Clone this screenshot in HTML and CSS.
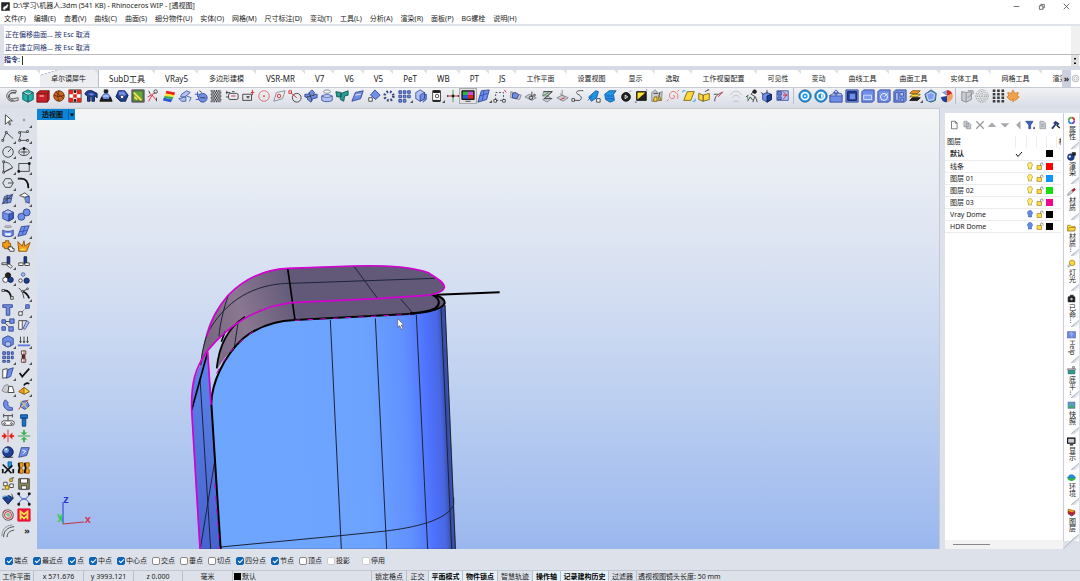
FILE: index.html
```html
<!DOCTYPE html>
<html lang="zh-CN">
<head>
    <meta charset="UTF-8" />
    <meta name="viewport" content="width=device-width, initial-scale=1.0"/>
    <title>Rhinoceros WIP</title>
    <link rel="stylesheet" href="styles.css">
</head>
<body>
    <header class="titlebar">
        <svg class="app-icon" viewBox="0 0 16 16"><path class="k" d="M1 1h14v14H1z"/><path class="w" d="M3 13c0-4 2-6 5-6l4-4 1 3-2 5-3 1-1 3z"/><path d="M5 3l2 3M3 5l3 2"/></svg>
        <span class="title">D:\学习\机器人.3dm (541 KB) - Rhinoceros WIP - [透视图]</span>
        <div class="window-buttons">
            <button title="最小化"><svg viewBox="0 0 10 10"><path d="M1 5h8"/></svg></button>
            <button title="还原"><svg viewBox="0 0 10 10"><path d="M2 4h5v5H2zM4 4V2h5v5H7"/></svg></button>
            <button title="关闭"><svg viewBox="0 0 10 10"><path d="M1 1l8 8M9 1L1 9"/></svg></button>
        </div>
    </header>

    <nav class="menu">
        <a href="#">文件(F)</a><a href="#">编辑(E)</a><a href="#">查看(V)</a><a href="#">曲线(C)</a><a href="#">曲面(S)</a><a href="#">细分物件(U)</a><a href="#">实体(O)</a><a href="#">网格(M)</a><a href="#">尺寸标注(D)</a><a href="#">变动(T)</a><a href="#">工具(L)</a><a href="#">分析(A)</a><a href="#">渲染(R)</a><a href="#">面板(P)</a><a href="#">BG螺栓</a><a href="#">说明(H)</a>
    </nav>

    <section class="command">
        <div class="history">
            <p>正在偏移曲面... 按 Esc 取消</p>
            <p>正在建立网格... 按 Esc 取消</p>
        </div>
        <div class="prompt">
            <label for="cmd">指令:</label>
            <input type="text" id="cmd" autocomplete="off" />
            <button class="spin" title="历史"><svg viewBox="0 0 8 10"><path class="k" d="M3 3l1-1 1 1zM3 7l1 1 1-1z"/></svg></button>
        </div>
    </section>

    <div class="tabbar">
        <div class="tabs">
            <button class="tab">标准</button>
            <button class="tab active">卓尔谟犀牛</button>
            <button class="tab en">SubD工具</button>
            <button class="tab en">VRay5</button>
            <button class="tab">多边形建模</button>
            <button class="tab en">VSR-MR</button>
            <button class="tab en">V7</button>
            <button class="tab en">V6</button>
            <button class="tab en">V5</button>
            <button class="tab en">PeT</button>
            <button class="tab en">WB</button>
            <button class="tab en">PT</button>
            <button class="tab en">JS</button>
            <button class="tab">工作平面</button>
            <button class="tab">设置视图</button>
            <button class="tab">显示</button>
            <button class="tab">选取</button>
            <button class="tab">工作视窗配置</button>
            <button class="tab">可见性</button>
            <button class="tab">变动</button>
            <button class="tab">曲线工具</button>
            <button class="tab">曲面工具</button>
            <button class="tab">实体工具</button>
            <button class="tab">网格工具</button>
            <button class="tab">渲染</button>
        </div>
        <button class="overflow">»</button>
        <button class="gear" title="选项"><svg viewBox="0 0 16 16"><circle class="g" cx="8" cy="8" r="6"/><circle class="g" cx="8" cy="8" r="3"/></svg></button>
    </div>

    <div class="toolbar">
        <div class="group g27">
            <button><svg viewBox="0 0 16 16"><path class="lg" d="M13 2C6 0 2 4 2 8c0 4 4 7 8 6l5-1v-3l-5 1c-3 1-5-1-5-3 0-3 3-4 7-3z"/><path d="M12 4C7 3 4 6 4 9s3 4 6 4"/></svg></button>
            <button><svg viewBox="0 0 16 16"><path class="teal" d="M8 1l6 3v8l-6 3-6-3V4z"/><path d="M2 4l6 3 6-3M8 7v8"/><path class="white" d="M4 4l4 2 3-1"/></svg></button>
            <button><svg viewBox="0 0 16 16"><path class="red" d="M1 5l3-3h11v10l-2 3H1z"/><path class="darkred" d="M1 5h12v10M13 5l2-3"/><path class="white" d="M4 8h5"/></svg></button>
            <button><svg viewBox="0 0 16 16"><circle class="brown" cx="8" cy="8" r="6"/><path class="darkred" d="M2 7c4 2 8 2 12 0M8 2c-2 4-2 8 0 12M4 3c2 3 6 4 9 8"/></svg></button>
            <button><svg viewBox="0 0 16 16"><path class="w" d="M1 1h14v14H1z"/><path class="redf" d="M1 1h5v5H1zM10 1h5v5h-5zM6 6h4v4H6zM1 10h5v5H1zM10 10h5v5h-5z"/><path class="k" d="M7 2h2v2H7zM7 12h2v2H7z"/></svg></button>
            <button><svg viewBox="0 0 16 16"><path class="navy" d="M1 6c1-4 5-5 8-4l6 3v5l-3-2v6H9V9L7 8v6H4V8z"/><path class="b" d="M4 6c2-2 6-2 8 0l-3 2z"/></svg></button>
            <button><svg viewBox="0 0 16 16"><path class="b" d="M3 13C3 8 5 5 8 5s5 3 5 8z"/><path class="k" d="M6 1h4v3H6zM1 14l2-5 2 3h6l2-3 2 5z"/><path class="white" d="M5 8h6"/></svg></button>
            <button><svg viewBox="0 0 16 16"><path class="navy" d="M4 2h7l4 5-3 7H6L1 9z"/><path class="b" d="M4 3l6-1 3 4-3 3-6-2z"/><circle class="w" cx="8" cy="9" r="2"/></svg></button>
            <button><svg viewBox="0 0 16 16"><path class="green" d="M2 2h12v12H2z"/><path class="ye" d="M3 4l9 9M4 9l3 3"/><path d="M1 1h14v14H1z"/></svg></button>
            <button><svg viewBox="0 0 16 16"><path class="rd" d="M2 9l9-5M3 14l4-7 5 6"/><circle cx="11" cy="3" r="2"/><path d="M3 2l2 4M12 10v4"/></svg></button>
            <button><svg viewBox="0 0 16 16"><path class="redf" d="M5 2l10 2-1 3L4 5z"/><path class="yf" d="M4 5l10 2-1 2L3 8z"/><path class="gf" d="M3 8l10 1-1 3L2 10z"/><path class="bf" d="M2 10l10 2-2 3-9-2z"/></svg></button>
            <button><svg viewBox="0 0 16 16"><path class="lb" d="M4 6l6-4 4 2-6 5-5 0z"/><path class="lb" d="M1 11l8-2v5H4z"/><path class="bl" d="M10 8l5 2-2 4"/></svg></button>
            <button><svg viewBox="0 0 16 16"><circle class="b" cx="10" cy="10" r="5"/><path class="bl" d="M1 6h6M4 3v6M2 12h3"/><path d="M6 2l3 2M7 10h6"/></svg></button>
            <button><svg viewBox="0 0 16 16"><path class="check" d="M2 2h12M3 4h12M2 6h12M3 8h12M2 10h12M3 12h12M2 14h12"/></svg></button>
            <button><svg viewBox="0 0 16 16"><rect x="4" y="5" width="11" height="7" rx="2"/><path class="rd" d="M7 8h5"/><path d="M1 4h5M2 2v4M1 9h3M8 3h3"/></svg></button>
            <button><svg viewBox="0 0 16 16"><path d="M2 6h10v7H2z"/><path class="rd" d="M13 1v6M11 4h4M7 9h2"/><path d="M6 9h4M8 8v3"/></svg></button>
            <button><svg viewBox="0 0 16 16"><circle class="pk" cx="8" cy="8" r="6"/><circle class="redf" cx="8" cy="8" r="1"/></svg></button>
            <button><svg viewBox="0 0 16 16"><path class="g" d="M5 4l10-2-3 9-10 3z"/><circle class="rd" cx="8" cy="8" r="2"/></svg></button>
            <button><svg viewBox="0 0 16 16"><circle cx="10" cy="10" r="5"/><path class="rd" d="M1 2h3v3H1zM4 5l6 5"/></svg></button>
            <button><svg viewBox="0 0 16 16"><path class="b" d="M6 4l3-3 3 3-1 2h4v4l-5 1-2 4-4-3v-2l-3-1V6h4z"/><path d="M3 9l9-2M6 4l3 9"/></svg></button>
            <button><svg viewBox="0 0 16 16"><ellipse class="g" cx="8" cy="3" rx="4" ry="2"/><path class="lb" d="M2 8c3 2 9 2 12 0v5c-3 2-9 2-12 0z"/><path class="bl" d="M2 8c3-2 9-2 12 0"/></svg></button>
            <button><svg viewBox="0 0 16 16"><path class="teal2" d="M1 3l6 1v5H2zM7 5l8-3v5l-4 1-1 6-4-2V9z"/></svg></button>
            <button><svg viewBox="0 0 16 16"><path class="b" d="M5 4l9-2-3 9-10 3z"/><path class="white" d="M5 7l6-1"/></svg></button>
            <button><svg viewBox="0 0 16 16"><path class="b" d="M9 1l6 6-5 5-6-5z"/><path class="w" d="M2 10h4v4H2z"/></svg></button>
            <button><svg viewBox="0 0 16 16"><circle class="dots" cx="8" cy="8" r="5"/></svg></button>
            <button class="more"><svg viewBox="0 0 16 16"><path class="b" d="M1 2h3v3H1zM6 2h3v3H6zM11 2h3v3h-3zM1 7h3v3H1zM6 7h3v3H6zM11 7h3v3h-3zM1 12h3v3H1zM6 12h3v3H6z"/></svg></button>
            <button><svg viewBox="0 0 16 16"><path class="lb" d="M2 4l5-3 5 3v7l-5 3-5-3z"/><path class="b" d="M7 7l5-3v7l-5 3zM12 6h2v6l-4 3"/></svg></button>
        </div>
        <div class="group g23">
            <button class="more"><svg viewBox="0 0 16 16"><path class="w" d="M3 2h9v12H3z"/><path class="k" d="M4 2h7v2H4zM4 13h7v1H4z"/><circle cx="8" cy="8" r="2"/></svg></button>
            <button><svg viewBox="0 0 16 16"><path class="rd" d="M1 8h14"/><path class="gr" d="M8 1v14"/><path class="k" d="M7 7h2v2H7zM2 7v2M14 7v2"/></svg></button>
            <button class="pressed"><svg viewBox="0 0 16 16"><path class="k" d="M1 2h14v10H1z"/><path class="gf" d="M2 3h6v4H2z"/><path class="mf" d="M8 3h6v4H8z"/><path class="bf" d="M2 7h6v4H2z"/><path class="redf" d="M8 7h6v4H8z"/><path d="M5 14h6"/></svg></button>
            <button class="more"><svg viewBox="0 0 16 16"><path class="b" d="M5 2l9-1-3 11-10 3z"/><path class="bl" d="M3 8l9-3M8 2L6 13"/></svg></button>
            <button><svg viewBox="0 0 16 16"><path class="dash" d="M3 4h9v9H3z"/><path class="w" d="M1 12h3v3H1zM11 12h3v3h-3z"/><path class="rd" d="M13 1l2 3"/></svg></button>
            <button><svg viewBox="0 0 16 16"><path class="gy" d="M2 3l12 4-2 5-10-2z"/><path class="b" d="M4 5l4-1 3 3-2 4-5-1z"/></svg></button>
            <button><svg viewBox="0 0 16 16"><path class="gy" d="M1 9l5-3 8 4-5 3z"/><circle cx="8" cy="10" r="2"/><circle cx="12" cy="7" r="1"/><path d="M9 3v6"/></svg></button>
            <button><svg viewBox="0 0 16 16"><path class="gy" d="M4 3h10l-5 5H3zM3 12l6-4 4 3-5 4z"/><path class="gr" d="M3 8l7-4"/><path d="M4 3h10L5 11h9"/></svg></button>
            <button><svg viewBox="0 0 16 16"><path class="gy" d="M1 10l6-3 7 3-6 4z"/><path class="g" d="M7 1v6l3 2M5 5l2 3"/><path class="rd" d="M5 12l5-2"/></svg></button>
            <button><svg viewBox="0 0 16 16"><path d="M14 2C7 1 4 4 8 6s5 5 2 7H4"/><path class="w" d="M1 11h3v3H1z"/></svg></button>
            <button><svg viewBox="0 0 16 16"><path class="cy" d="M2 9l8-7 3 1-2 7-6 4z"/><path class="w" d="M11 11h4v4h-4z"/><path class="bl" d="M1 13l5-5"/></svg></button>
            <button><svg viewBox="0 0 16 16"><path class="cy" d="M2 6l5-4h8l-3 4 1 7-5 2-5-3z"/><path class="bl" d="M3 8h8M4 11h8"/></svg></button>
            <button><svg viewBox="0 0 16 16"><circle class="k" cx="8" cy="9" r="5"/><path class="white" d="M7 7l3 2-3 2z"/><path class="g" d="M12 3l2-1"/></svg></button>
            <button><svg viewBox="0 0 16 16"><path class="k" d="M3 3h11v10H3z"/><path class="yf" d="M4 4h9l-9 8z"/><path d="M1 15h2M14 1h1"/></svg></button>
            <button><svg viewBox="0 0 16 16"><path class="gy" d="M2 4l4-3 3 4 5-2-1 10-11 1z"/><path class="y" d="M5 9h3v5H4zM10 7l3 6h-3z"/><path d="M4 5h5M11 4v3"/></svg></button>
            <button><svg viewBox="0 0 16 16"><path class="pk" d="M8 8c2-2 3 2 0 3-4 1-6-5-1-8 5-1 8 4 6 8M3 12l-2 2M13 3l2-2"/></svg></button>
            <button><svg viewBox="0 0 16 16"><path class="y" d="M6 3h8l-4 10H2z"/><path class="cl" d="M1 4V2h3M12 14h3v-3"/></svg></button>
            <button><svg viewBox="0 0 16 16"><path class="y" d="M2 5l5 2 7-2v7l-7 2-5-2z"/><path d="M7 7v7M9 3l4-2M12 1h2"/></svg></button>
            <button><svg viewBox="0 0 16 16"><path d="M2 14c0-6 3-8 9-10M1 6h4"/><path class="rd" d="M6 9l5-6"/></svg></button>
            <button><svg viewBox="0 0 16 16"><path class="lgs" d="M2 7c2-6 10-6 12 0M4 10c2-4 6-4 8 0M5 14h6"/></svg></button>
            <button><svg viewBox="0 0 16 16"><path d="M3 14l3-5 3 4M10 2l-3 4 5 3 2 6M11 9l-2 6M1 9l3-2"/><circle class="k" cx="11" cy="3" r="2"/><path class="gr" d="M3 7v5"/></svg></button>
            <button><svg viewBox="0 0 16 16"><path class="b" d="M3 6l5-2 5 2v6l-5 3-5-3z"/><path class="navy" d="M8 8l5-2v6l-5 3z"/><path d="M8 1v4M1 4l3 2"/></svg></button>
            <button><svg viewBox="0 0 16 16"><path class="lb" d="M1 2h13v11H1z"/><path class="rd" d="M8 3l4 4-4 5M8 7h5"/><path class="b" d="M2 3h4v4H2zM2 9h4v3H2z"/></svg></button>
        </div>
        <div class="group g10">
            <button><svg viewBox="0 0 16 16"><circle class="cy" cx="8" cy="8" r="7"/><circle class="wring" cx="8" cy="8" r="4"/><path class="wf" d="M7 7h2v2H7z"/></svg></button>
            <button><svg viewBox="0 0 16 16"><circle class="cy" cx="8" cy="8" r="7"/><circle class="wring" cx="8" cy="8" r="4"/><path class="wf" d="M8 6h2v4H8z"/></svg></button>
            <button><svg viewBox="0 0 16 16"><path class="b" d="M1 7h14v8H1z"/><path class="lb" d="M1 8l4-3h9l1 3zM8 1l3 3H9v3H7V4H5z"/></svg></button>
            <button><svg viewBox="0 0 16 16"><path class="b" d="M1 1h14v14H1z"/><path class="navy" d="M3 3h10v10H3z"/><path class="b" d="M5 5h7v7H5z"/></svg></button>
            <button><svg viewBox="0 0 16 16"><path class="b" d="M1 3l2-2h12v12l-2 2H1z"/><path class="lb2" d="M3 7h9v5H3z"/></svg></button>
            <button><svg viewBox="0 0 16 16"><path class="b" d="M1 3l2-2h12v12l-2 2H1z"/><circle class="white" cx="8" cy="9" r="4"/><path class="white" d="M8 9l4-4"/></svg></button>
            <button><svg viewBox="0 0 16 16"><path class="b" d="M1 3l2-2h12v12l-2 2H1z"/><path class="lb" d="M3 4h3v9H3zM8 4h4v4H8zM9 11h3v3H9z"/></svg></button>
            <button class="more"><svg viewBox="0 0 16 16"><path class="o" d="M5 2h9l-3 3H2z"/><path class="y" d="M5 6h9l-3 3H2z"/><path class="k" d="M5 10h9l-3 3H2z"/></svg></button>
            <button><svg viewBox="0 0 16 16"><path class="steel" d="M8 1l6 4-1 8-5 2-5-2-2-7z"/><path class="lb2" d="M3 6l5-2 4 2-1 6-6 1z"/></svg></button>
            <button><svg viewBox="0 0 16 16"><circle class="wf" cx="8" cy="8" r="7"/><path class="redf" d="M8 8V1a7 7 0 0 1 6 4z"/><path class="navyf" d="M8 8L1 9a7 7 0 0 0 7 6z"/><path class="of" d="M8 8l6-3c2 4 0 9-6 10z"/><path class="sf" d="M8 8L2 4l6-3z"/></svg></button>
        </div>
        <div class="group g4">
            <button><svg viewBox="0 0 16 16"><path class="gy" d="M2 3l5 1 6-1v9l-6 3-5-2z"/><path class="g" d="M7 5v9M9 2h6v4M9 10l5-5"/></svg></button>
            <button><svg viewBox="0 0 16 16"><circle class="dotg" cx="8" cy="8" r="7"/><circle class="dotg" cx="8" cy="8" r="5"/><circle class="dotg" cx="8" cy="8" r="3"/><circle class="dotg" cx="8" cy="8" r="1"/></svg></button>
            <button><svg viewBox="0 0 16 16"><path class="dot2" d="M2 2h13M2 6h13M2 10h13M2 14h13"/></svg></button>
            <button><svg viewBox="0 0 16 16"><path class="leaf" d="M8 1l2 4 4-1-1 4 2 1-4 4-3-1v3-3l-3 1-4-4 2-1-1-4 4 1z"/></svg></button>
        </div>
    </div>

    <main>
        <aside class="sidebar">
            <button><svg viewBox="0 0 16 16"><path class="w" d="M5 2v11l3-3 2 4 1-1-2-4h4z"/></svg></button>
            <button class="more"><svg viewBox="0 0 16 16"><circle class="g" cx="8" cy="8" r="1"/></svg></button>
            <button class="more"><svg viewBox="0 0 16 16"><path d="M2 13l4-9 8 7"/><path class="w" d="M1 12h2v2H1zM5 3h2v2H5z"/></svg></button>
            <button class="more"><svg viewBox="0 0 16 16"><path d="M3 4c3-2 6 1 9-1M3 4c3 2-1 6 0 9h9"/><path class="w" d="M2 3h2v2H2zM11 2h2v2h-2zM2 12h2v2H2zM11 12h2v2h-2z"/></svg></button>
            <button class="more"><svg viewBox="0 0 16 16"><circle cx="8" cy="8" r="6"/><path d="M8 8l4-4"/></svg></button>
            <button class="more"><svg viewBox="0 0 16 16"><ellipse cx="8" cy="8" rx="6" ry="4"/><path d="M4 8h8M8 3v8"/><path class="k" d="M7 3h2v2H7z"/></svg></button>
            <button class="more"><svg viewBox="0 0 16 16"><path d="M3 14V2c6 1 9 3 10 7zM3 14l10-5"/><path class="w" d="M2 1h2v2H2zM2 13h2v2H2z"/></svg></button>
            <button class="more"><svg viewBox="0 0 16 16"><path d="M2 4h12v9H2z"/><path class="k" d="M1 12h2v2H1zM13 3h2v2h-2z"/></svg></button>
            <button class="more"><svg viewBox="0 0 16 16"><path d="M5 3h6l3 5-3 5H5L2 8zM8 8h6"/></svg></button>
            <button class="more"><svg viewBox="0 0 16 16"><path class="thick" d="M1 3h4c6 0 8 4 8 11"/><path d="M1 3h3"/></svg></button>
            <button class="more"><svg viewBox="0 0 16 16"><path class="b" d="M4 5l9-2-2 9-9 1z"/><path d="M1 14L14 2M3 8l9-1M7 3v10"/></svg></button>
            <button class="more"><svg viewBox="0 0 16 16"><path class="w" d="M3 4l6-3 5 4-5 1z"/><path class="b" d="M9 6l5-1v8l-4-2z"/><path class="g" d="M3 4l6 3 1 6"/></svg></button>
            <button class="more"><svg viewBox="0 0 16 16"><path class="b" d="M2 5l6-3 6 3v7l-6 3-6-3z"/><path class="blue3" d="M9 7l5-2v7l-5 3z"/><path class="lb" d="M2 5l6-3 6 3-6 2z"/></svg></button>
            <button class="more"><svg viewBox="0 0 16 16"><circle class="b" cx="11" cy="5" r="4"/><circle class="b" cx="5" cy="10" r="4"/></svg></button>
            <button class="more"><svg viewBox="0 0 16 16"><ellipse class="g" cx="8" cy="3" rx="4" ry="1"/><path class="b" d="M2 7c3 2 9 2 12 0v6c-3 2-9 2-12 0z"/><path class="wf" d="M5 10c2 1 4 1 6 0v3H5z"/></svg></button>
            <button class="more"><svg viewBox="0 0 16 16"><path class="b" d="M5 3l9-1-4 10-9 2z"/><path class="bl" d="M3 9l9-2M9 3L6 12"/></svg></button>
            <button><svg viewBox="0 0 16 16"><path class="o" d="M2 4h3V2h4v3h2v4H8v2H4V9H2z"/><path class="w" d="M9 9h4v2h2v3h-5v-2H8z"/></svg></button>
            <button><svg viewBox="0 0 16 16"><path class="o" d="M2 14L1 3l5 5 2-6 1 6 6-4-4 10z"/><path class="ye" d="M4 12h6"/></svg></button>
            <button class="more"><svg viewBox="0 0 16 16"><path class="navy" d="M7 2h3v8H7z"/><path class="w" d="M1 9h6v2H1zM9 10l4 3-2 2-4-3z"/></svg></button>
            <button><svg viewBox="0 0 16 16"><path class="navy" d="M8 2h3v8H8z"/><path class="w" d="M2 9h5v3H2zM9 9h5v3H9z"/></svg></button>
            <button class="more"><svg viewBox="0 0 16 16"><circle class="k" cx="8" cy="5" r="3"/><circle class="w" cx="5" cy="10" r="3"/><circle class="navy" cx="11" cy="10" r="3"/></svg></button>
            <button><svg viewBox="0 0 16 16"><circle class="lb" cx="7" cy="4" r="2"/><circle class="w" cx="4" cy="11" r="2"/><circle class="navy" cx="11" cy="11" r="3"/></svg></button>
            <button><svg viewBox="0 0 16 16"><path class="thick" d="M2 4c6-1 9 3 10 9"/><path class="w" d="M1 3h3v2H1zM11 11h3v3h-3z"/></svg></button>
            <button class="more"><svg viewBox="0 0 16 16"><path class="thick" d="M6 5c4 1 6 3 8 8"/><path d="M2 1l4 4 2 8M6 5l7-3"/><circle class="w" cx="6" cy="5" r="1"/><circle class="w" cx="12" cy="2" r="1"/></svg></button>
            <button><svg viewBox="0 0 16 16"><path class="b" d="M2 2h11v3h-3v9H6V5H2z"/></svg></button>
            <button class="more"><svg viewBox="0 0 16 16"><path class="w" d="M2 10h4v4H2z"/><path class="b" d="M10 2h4v4h-4z"/><path class="dash" d="M6 10l4-4"/></svg></button>
            <button><svg viewBox="0 0 16 16"><path class="b" d="M1 2h4v4H1zM10 1h5v5h-5zM1 10h4v4H1zM9 10h5v5H9z"/><path d="M5 6l4 4M5 4h5"/></svg></button>
            <button><svg viewBox="0 0 16 16"><path class="w" d="M2 3h4v10H2z"/><path class="lb" d="M11 3l3 2-5 8-2-1z"/><path d="M6 3h5"/></svg></button>
            <button class="more"><svg viewBox="0 0 16 16"><path class="b" d="M2 5l6-3 6 3v7l-6 3-6-3z"/><path class="lb" d="M5 9h6v5H5z"/></svg></button>
            <button class="more"><svg viewBox="0 0 16 16"><path d="M4 3v7M8 3v7M12 3v7M3 8l1 2 1-2M7 8l1 2 1-2M11 8l1 2 1-2"/><path class="bl2" d="M1 13h14"/></svg></button>
            <button class="more"><svg viewBox="0 0 16 16"><path class="b" d="M2 2h3v3H2zM7 2h3v3H7zM12 2h2v3h-2zM2 7h3v3H2zM7 7h3v3H7zM12 7h2v3h-2zM2 12h3v2H2zM7 12h3v2H7z"/></svg></button>
            <button class="more"><svg viewBox="0 0 16 16"><path class="w" d="M5 1h5v4H5zM5 10h5v4H5z"/><path class="k" d="M6 6h3v3H6z"/><path class="rd" d="M8 1v14"/></svg></button>
            <button class="more"><svg viewBox="0 0 16 16"><path class="w" d="M2 4l5-1v10l-5 1z"/><path class="b" d="M8 4l6-2-3 10-5 2z"/></svg></button>
            <button class="more"><svg viewBox="0 0 16 16"><path class="thick" d="M3 8l3 4 8-9"/></svg></button>
            <button class="more"><svg viewBox="0 0 16 16"><path class="gy" d="M1 10l3-6 4-1 2 8-5 1z"/><path class="w" d="M9 5h4l2 7H8z"/></svg></button>
            <button class="more"><svg viewBox="0 0 16 16"><path class="o" d="M2 11l6-5 6 5-6 3z"/><path class="y" d="M8 6l6 5-6 3z"/><path class="thick" d="M8 4c1-3 4-3 6-2"/></svg></button>
            <button><svg viewBox="0 0 16 16"><path class="b" d="M5 2C1 6 3 12 8 14h5v-3c-4 0-6-3-5-6z"/></svg></button>
            <button><svg viewBox="0 0 16 16"><path class="b" d="M5 4l6-1 3 6-5 4-5-3z"/><path class="yel" d="M3 2l11 12M4 11l8-7"/><path class="rd" d="M13 2l-2 2M2 13l2-3"/></svg></button>
            <button><svg viewBox="0 0 16 16"><rect class="w" x="1" y="9" width="14" height="5" rx="2"/><path d="M3 3h10M3 1v4M13 1v4M8 3v6"/><circle cx="4" cy="12" r="1"/><circle cx="12" cy="12" r="1"/></svg></button>
            <button><svg viewBox="0 0 16 16"><path class="blue2" d="M4 2h8v4H4zM6 6h4v9H6z"/></svg></button>
            <button><svg viewBox="0 0 16 16"><path class="redf" d="M1 7h2V4l4 4-4 4V9H1zM15 7h-2V4L9 8l4 4V9h2z"/><path class="rd" d="M8 1v14"/></svg></button>
            <button><svg viewBox="0 0 16 16"><path class="gf" d="M7 1h2v3h3L8 7 4 4h3zM7 15h2v-3h3L8 9l-4 3h3z"/><path class="gr" d="M1 8h14"/></svg></button>
            <button><svg viewBox="0 0 16 16"><path d="M2 14h12"/><circle class="navy" cx="8" cy="8" r="6"/><circle class="sf" cx="6" cy="6" r="3"/><circle class="wf" cx="6" cy="5" r="1"/></svg></button>
            <button><svg viewBox="0 0 16 16"><path class="b" d="M5 3l9 0-3 9-9 2z"/><path class="white" d="M6 6l4 1-3 3"/></svg></button>
            <button><svg viewBox="0 0 16 16"><path class="cy" d="M8 1h4v6H8z"/><path class="thick" d="M2 4l10 10M13 5L4 14M2 14V9M14 14V9"/></svg></button>
            <button><svg viewBox="0 0 16 16"><path class="o" d="M3 2h4v4L5 8l2 2v4H3zM10 2h4v4l-2 2 2 2v4h-4z"/><path class="thick" d="M2 2v3l1 3-1 3v3M9 2v3l1 3-1 3v3"/></svg></button>
            <button><svg viewBox="0 0 16 16"><path class="w" d="M3 6h4v4H3zM10 8h4v4h-4z"/><path class="y" d="M5 10h4v4H5zM10 2h3v3h-3z"/><path d="M1 14h3M12 1h3"/></svg></button>
            <button><svg viewBox="0 0 16 16"><path class="olive" d="M2 2h12v12H2z"/><path class="w" d="M4 2h8v5H4zM5 10h6v4H5z"/></svg></button>
            <button><svg viewBox="0 0 16 16"><path class="navy" d="M2 7l7-3 5 3-6 7z"/><path class="cl" d="M1 6c3-2 6-2 9 1"/><path d="M12 2l2 5"/></svg></button>
            <button><svg viewBox="0 0 16 16"><path class="bl" d="M2 14C4 6 12 6 14 14M2 2c2 8 10 8 12 0"/><path class="k" d="M1 1h2v2H1zM13 1h2v2h-2zM1 13h2v2H1zM13 13h2v2h-2z"/></svg></button>
            <button><svg viewBox="0 0 16 16"><circle class="lg" cx="8" cy="8" r="6"/><circle class="rd" cx="8" cy="8" r="4"/><path class="gr" d="M6 7h4M7 9h3"/><path class="rd" d="M2 5l3-3M11 14l3-3"/></svg></button>
            <button><svg viewBox="0 0 16 16"><path class="magred" d="M1 1h14v14H1z"/><path class="fat" d="M4 13V8l4 4 4-4v5M4 8V4l4 3 4-3v4"/></svg></button>
            <button><svg viewBox="0 0 16 16"><path d="M3 15C3 8 7 4 15 3M7 15c0-4 2-7 8-8"/><path class="g" d="M1 14C1 6 5 2 13 1"/></svg></button>
            <button class="chev">»</button>
        </aside>

        <section class="viewport">
            <div class="view-title"><span>透视图</span><button title="视图菜单"><svg viewBox="0 0 8 8"><path d="M1 2h6L4 6z"/></svg></button></div>
            <!-- model units: 3 per screen pixel -->
            <svg class="model" viewBox="-429 -423 2709 1320">
                <defs>
                    <linearGradient id="front" gradientUnits="userSpaceOnUse" x1="94" y1="500" x2="826" y2="470">
                        <stop offset="0" stop-color="#6ea6fe"/><stop offset=".64" stop-color="#6ca3ff"/><stop offset=".8" stop-color="#6090ff"/>
                        <stop offset=".89" stop-color="#4e72ff"/><stop offset=".94" stop-color="#4867e2"/><stop offset=".965" stop-color="#364ca4"/><stop offset="1" stop-color="#5d80e0"/>
                    </linearGradient>
                    <linearGradient id="cap" gradientUnits="userSpaceOnUse" x1="70" y1="200" x2="340" y2="120">
                        <stop offset="0" stop-color="#7b6983"/><stop offset=".4" stop-color="#8a7790"/><stop offset="1" stop-color="#625979"/>
                    </linearGradient>
                    <linearGradient id="side" x1="0" y1="0" x2="0" y2="1">
                        <stop offset="0" stop-color="#5c84ea"/><stop offset="1" stop-color="#4763cf"/>
                    </linearGradient>
                </defs>
                <path fill="url(#side)" d="M62 345C45 375 33 420 35 480L60 897H122L94 450L83 305Z"/>
                <path fill="url(#cap)" d="M112 355C112 300 130 245 190 200L335 155L760 132C790 140 800 160 785 172C770 182 730 188 700 189L345 211C240 217 165 270 112 355Z"/>
                <path fill="url(#cap)" d="M62 345C75 240 95 190 145 135C200 80 260 58 323 55L520 48C640 44 700 52 745 68C765 82 793 95 793 112C790 125 770 132 740 136L590 146L335 158C230 172 150 220 80 305Z"/>
                <path fill="url(#front)" d="M94 460C95 400 130 320 190 265C240 225 290 212 345 210L700 191C750 186 780 178 795 165L827 897H120Z"/>
                <g class="iso">
                    <path d="M451 210L484 897M586 205L620 897M709 195L743 897M783 175L815 897M795 165L826 897"/>
                    <path d="M122 891L481 857L618 843C700 833 800 812 821 765V742"/>
                    <path d="M60 385L92 897M62 890L85 750L103 640"/>
                    <path d="M145 135C130 180 120 220 117 260M85 245C150 130 250 100 333 100L765 85M523 50L593 146M663 148L697 188"/>
                    <path d="M62 345C65 310 72 280 84 245M175 212L163 292"/>
                </g>
                <g class="edge">
                    <path d="M323 55L345 210"/>
                    <path d="M82 310L35 480"/>
                    <path d="M195 200C150 230 118 280 110 355M135 245L124 275"/>
                    <path class="rim" d="M122 897L94 460C95 400 130 320 190 265C240 225 290 212 345 210L700 191C750 186 785 178 794 160C794 146 780 137 755 134C780 145 783 163 765 175C745 185 720 188 690 190"/>
                    <path class="rim" d="M770 134L959 127"/>
                </g>
                <path class="mag dashed" d="M345 211L690 193M110 370C140 310 180 270 230 238M104 700L119 897"/>
                <path class="mag" d="M60 897L35 480C33 400 45 355 80 305C150 220 230 172 335 158L590 146L740 136C770 132 790 125 793 112C793 95 765 82 745 68C700 52 640 44 520 48L323 55C260 58 200 80 145 135C110 175 90 220 80 260M83 305L93 465"/>
                <path class="pointer" d="M653 205V232L659 227L664 238L669 236L664 225H671Z"/>
                <path class="axis-z" d="M-351 822V756"/>
                <path class="axis-x" d="M-351 822L-288 816"/>
                <path class="axis-y" d="M-351 822L-360 797"/>
                <text class="tz" x="-350" y="758">z</text>
                <text class="tx" x="-286" y="820">x</text>
                <text class="ty" x="-369" y="811">y</text>
            </svg>
        </section>

        <section class="layers">
            <div class="layer-tools">
                <button title="新图层"><svg viewBox="0 0 16 16"><path class="w" d="M4 2h6l3 3v9H4z"/><path d="M10 2v3h3"/></svg></button>
                <button title="新子图层"><svg viewBox="0 0 16 16"><path class="gy" d="M3 2h5l2 2v7H3zM7 5h5l2 2v7H7z"/></svg></button>
                <button title="删除"><svg viewBox="0 0 16 16"><path class="x" d="M2 2l12 12M14 2L2 14"/></svg></button>
                <button title="上移"><svg viewBox="0 0 16 16"><path class="dg" d="M1 11l7-7 7 7z"/></svg></button>
                <button title="下移"><svg viewBox="0 0 16 16"><path class="dg" d="M1 5l7 7 7-7z"/></svg></button>
                <button title="左移"><svg viewBox="0 0 16 16"><path class="dg" d="M12 1L5 8l7 7z"/></svg></button>
                <button title="过滤"><svg viewBox="0 0 16 16"><path class="blue3" d="M1 2h12L9 8v6H6V8z"/><path class="k" d="M14 12h1v2h-1z"/></svg></button>
                <button title="展开"><svg viewBox="0 0 16 16"><path class="gy" d="M3 2h6l3 3v9H3z"/><path class="g" d="M5 7h5M5 10h5"/></svg></button>
                <button title="工具"><svg viewBox="0 0 16 16"><path class="navy" d="M4 5l3-3 6 4-2 2-2-2-6 8-2-1 6-7z"/><path class="thick" d="M9 8l5 5"/></svg></button>
            </div>
            <table>
                <thead>
                    <tr><th>图层</th><th class="c1"></th><th class="c2"></th><th class="c2"></th><th class="c2"></th><th class="c3">材</th></tr>
                </thead>
                <tbody>
                    <tr class="current"><td>默认</td><td><svg viewBox="0 0 16 16"><path class="thick" d="M2 8l4 5 8-9"/></svg></td><td></td><td></td><td><i class="swatch black"></i></td><td></td></tr>
                    <tr><td>线条</td><td></td><td><svg viewBox="0 0 16 16"><path class="bulb" d="M5 10C1 6 4 1 8 1s7 5 3 9v4H5z"/></svg></td><td><svg viewBox="0 0 16 16"><path class="y" d="M2 7h9v8H2z"/><path d="M9 7V4c0-3 5-3 5 0v3"/></svg></td><td><i class="swatch line-red"></i></td><td></td></tr>
                    <tr><td>图层 01</td><td></td><td><svg viewBox="0 0 16 16"><path class="bulb" d="M5 10C1 6 4 1 8 1s7 5 3 9v4H5z"/></svg></td><td><svg viewBox="0 0 16 16"><path class="y" d="M2 7h9v8H2z"/><path d="M9 7V4c0-3 5-3 5 0v3"/></svg></td><td><i class="swatch blue"></i></td><td></td></tr>
                    <tr><td>图层 02</td><td></td><td><svg viewBox="0 0 16 16"><path class="bulb" d="M5 10C1 6 4 1 8 1s7 5 3 9v4H5z"/></svg></td><td><svg viewBox="0 0 16 16"><path class="y" d="M2 7h9v8H2z"/><path d="M9 7V4c0-3 5-3 5 0v3"/></svg></td><td><i class="swatch lime"></i></td><td></td></tr>
                    <tr><td>图层 03</td><td></td><td><svg viewBox="0 0 16 16"><path class="bulb" d="M5 10C1 6 4 1 8 1s7 5 3 9v4H5z"/></svg></td><td><svg viewBox="0 0 16 16"><path class="y" d="M2 7h9v8H2z"/><path d="M9 7V4c0-3 5-3 5 0v3"/></svg></td><td><i class="swatch pink"></i></td><td></td></tr>
                    <tr><td>Vray Dome</td><td></td><td><svg viewBox="0 0 16 16"><path class="bulb off" d="M5 10C1 6 4 1 8 1s7 5 3 9v4H5z"/></svg></td><td><svg viewBox="0 0 16 16"><path class="y" d="M2 7h9v8H2z"/><path d="M9 7V4c0-3 5-3 5 0v3"/></svg></td><td><i class="swatch black"></i></td><td></td></tr>
                    <tr><td>HDR Dome</td><td></td><td><svg viewBox="0 0 16 16"><path class="bulb off" d="M5 10C1 6 4 1 8 1s7 5 3 9v4H5z"/></svg></td><td><svg viewBox="0 0 16 16"><path class="y" d="M2 7h9v8H2z"/><path d="M9 7V4c0-3 5-3 5 0v3"/></svg></td><td><i class="swatch black"></i></td><td></td></tr>
                </tbody>
            </table>
            <div class="hscroll"><div class="thumb"></div></div>
        </section>

        <nav class="side-tabs">
            <button><svg viewBox="0 0 16 16"><path class="ring r1" d="M8 3a5 5 0 0 1 5 5"/><path class="ring r2" d="M13 8a5 5 0 0 1-5 5"/><path class="ring r3" d="M8 13a5 5 0 0 1-5-5"/><path class="ring r4" d="M3 8a5 5 0 0 1 5-5"/></svg><span>属性</span></button>
            <button><svg viewBox="0 0 16 16"><circle class="navy" cx="7" cy="9" r="6"/><path class="k" d="M9 1h6v5h-4z"/><circle class="wf" cx="5" cy="8" r="2"/></svg><span>渲染</span></button>
            <button><svg viewBox="0 0 16 16"><path class="red" d="M8 6l5-4 2 3-5 4z"/><path class="gy" d="M2 11l6-5 3 3-6 5-4 1z"/></svg><span>材质</span></button>
            <button><svg viewBox="0 0 16 16"><path class="y" d="M1 4h5l2 2h6v8H1z"/><path class="y" d="M4 8h11l-2 6H1z"/></svg><span>材质…</span></button>
            <button><svg viewBox="0 0 16 16"><circle class="y" cx="9" cy="7" r="5"/><path class="gy" d="M1 12l4-3 2 2-4 4z"/></svg><span>灯光</span></button>
            <button><svg viewBox="0 0 16 16"><path class="k" d="M2 5h3l1-3h5l1 3h2v9H2z"/><circle class="gy" cx="8" cy="9" r="2"/></svg><span>已命…</span></button>
            <button><svg viewBox="0 0 16 16"><path class="b" d="M1 3h14v11H1z"/><path class="white" d="M5 6c2-3 6 0 3 3v1M8 12v1"/></svg><span>Help</span></button>
            <button><svg viewBox="0 0 16 16"><path class="w" d="M1 5h14v2H1zM10 1h3v3h-3z"/><path class="teal2" d="M2 8h12v6H2z"/></svg><span>底平…</span></button>
            <button><svg viewBox="0 0 16 16"><path class="steel" d="M2 2h12v11H2z"/><path class="gf" d="M3 12l5-5 5 5z"/></svg><span>快照</span></button>
            <button><svg viewBox="0 0 16 16"><path class="gy" d="M1 2h13v9H1z"/><path class="thick" d="M1 2h13v9H1zM5 14h6"/></svg><span>显示</span></button>
            <button><svg viewBox="0 0 16 16"><path class="cy" d="M1 9C3 1 13 1 15 9z"/><path class="gf" d="M1 9h14c0 4-4 5-7 5S1 13 1 9z"/></svg><span>环境</span></button>
            <button><svg viewBox="0 0 16 16"><path class="o" d="M2 2l12 3-5 4-7-3z"/><path class="red" d="M2 6l7 3 5-3v4l-5 4-7-4z"/><path class="bf" d="M2 10l7 3 3-2-4 4z"/></svg><span>图层</span></button>
        </nav>
    </main>

    <div class="osnap">
        <label><input type="checkbox" checked>端点</label>
        <label><input type="checkbox" checked>最近点</label>
        <label><input type="checkbox" checked>点</label>
        <label><input type="checkbox" checked>中点</label>
        <label><input type="checkbox" checked>中心点</label>
        <label><input type="checkbox">交点</label>
        <label><input type="checkbox">垂点</label>
        <label><input type="checkbox">切点</label>
        <label><input type="checkbox" checked>四分点</label>
        <label><input type="checkbox" checked>节点</label>
        <label><input type="checkbox">顶点</label>
        <label class="soft"><input type="checkbox">投影</label>
        <label class="soft disable"><input type="checkbox">停用</label>
    </div>

    <footer class="status">
        <button>工作平面</button>
        <span>x 571.676</span>
        <span>y 3993.121</span>
        <span>z 0.000</span>
        <button>毫米</button>
        <button class="layer"><i class="swatch black"></i>默认</button>
        <button>锁定格点</button>
        <button>正交</button>
        <button class="on">平面模式</button>
        <button class="on">物件锁点</button>
        <button>智慧轨迹</button>
        <button class="on">操作轴</button>
        <button class="on">记录建构历史</button>
        <button>过滤器</button>
        <span class="lens">透视视图镜头长度: 50 mm</span>
    </footer>
</body>
</html>
```
FILE: styles.css
```css
:root {
    --chrome: #dde1e9;
    --line: #b9bec8;
    --navy: #26336f;
    --text: #222;
}

* {
    box-sizing: border-box;
}

body {
    margin: 0;
    height: 100vh;
    display: flex;
    flex-direction: column;
    overflow: hidden;
    background: var(--chrome);
    color: var(--text);
    font-family: "Noto Sans", "Noto Sans CJK SC", sans-serif;
    font-size: 7px;
    line-height: 12px;
}

button {
    margin: 0;
    padding: 0;
    border: none;
    background: none;
    color: inherit;
    font: inherit;
    white-space: nowrap;
}

a {
    color: inherit;
    text-decoration: none;
}

svg {
    display: block;
    fill: none;
    stroke: #3a3a3a;
    stroke-width: 1;
}

/* title and menu */
.titlebar {
    display: flex;
    flex: none;
    align-items: center;
    height: 12px;
    background: #fff;
    padding-left: 1px;
}

.app-icon {
    width: 9px;
    height: 9px;
    margin-right: 3px;
}

.window-buttons {
    display: flex;
    gap: 18px;
    margin-left: auto;
    padding-right: 10px;
}

.window-buttons svg {
    width: 7px;
    height: 7px;
}

.menu {
    display: flex;
    flex: none;
    gap: 8px;
    height: 12px;
    padding-left: 4px;
    background: #fff;
    line-height: 13px;
}

/* command area */
.command {
    flex: none;
    height: 46px;
    padding-left: 4px;
    border-top: 2px solid #e1e5e9;
    border-bottom: 4px solid #d6dbe3;
    background: var(--chrome);
    color: var(--navy);
}

.history {
    height: 28px;
    padding: 2px 0 0 1px;
    border-right: 9px solid #f0f0f0;
    background: #fff;
}

.history p {
    margin: 0;
    line-height: 13px;
}

.prompt {
    display: flex;
    height: 12px;
    border-top: 1px solid #bbb;
    background: #fff;
    line-height: 10px;
}

.prompt label {
    font-weight: bold;
}

.prompt input {
    flex: 1;
    margin: 1px 0 1px 2px;
    padding: 0;
    border: none;
    border-left: 1px solid #333;
    outline: none;
    background: #fff;
    font: inherit;
}

.spin {
    width: 8px;
    margin-right: 1px;
    background: #e0e0e0;
}

/* toolbar tabs */
.tabbar {
    display: flex;
    flex: none;
    height: 17px;
    background: #fff;
}

.tabs {
    display: flex;
    flex: 1;
    min-width: 0;
    padding-left: 3px;
    overflow: hidden;
}

.tab {
    position: relative;
    flex: none;
    padding: 0 12px 0 11px;
    line-height: 17px;
}

.tab.en {
    padding: 0 10px;
    font-size: 8px;
}

.tab::after {
    content: "";
    position: absolute;
    top: 0;
    right: 0;
    border-top: 4px solid var(--chrome);
    border-left: 4px solid transparent;
}

.tab.active {
    border-right: 1px solid var(--line);
    background: linear-gradient(to bottom right, #fff 14%, #aeb4c0 15%, #eceef2 17%);
}

.overflow {
    flex: none;
    width: 9px;
    background: #cbd0e0;
    font-size: 9px;
    font-weight: bold;
}

.gear svg {
    width: 9px;
    height: 9px;
}

.toolbar {
    display: flex;
    flex: none;
    height: 21px;
    padding: 0 0 4px 4px;
    border-top: 1px solid #c6cad2;
    background: linear-gradient(#f1f2f5, #d8dce5);
}

.group {
    display: flex;
    flex: none;
    align-items: center;
}

.group button,
.sidebar button {
    position: relative;
    display: flex;
    flex: 1 1 0;
    min-width: 0;
    align-items: center;
    justify-content: center;
}

.group svg,
.sidebar svg {
    flex: none;
    width: 14px;
    height: 14px;
}

.g27 { width: 425px; }
.g23 { width: 362px; }
.g10 { width: 162px; padding-left: 3px; border-left: 1px solid var(--line); margin-left: 2px; }
.g4 { width: 66px; padding-left: 3px; border-left: 1px solid var(--line); }

.more::after {
    content: "";
    position: absolute;
    right: 0;
    bottom: 0;
    border-bottom: 3px solid #555;
    border-left: 3px solid transparent;
}

.group .pressed {
    outline: 1px solid #aaa;
    background: #e2e2e2;
}

main {
    display: flex;
    flex: 1;
    min-height: 0;
}

.sidebar {
    display: grid;
    flex: none;
    grid-template-columns: 16px 16px;
    grid-template-rows: repeat(27, 1fr);
    width: 37px;
    height: 431px;
    padding: 4px 0 0 0;
}

.sidebar .chev {
    padding-left: 6px;
    font-size: 9px;
    font-weight: bold;
}

/* viewport */
.viewport {
    position: relative;
    flex: 1;
    min-width: 0;
    overflow: hidden;
    border-top: 1px solid #c5c9d0;
    border-right: 1px solid #c5c9d0;
    background: linear-gradient(#f3f5f5 0%, #dbe3f2 33%, #bccff0 66%, #9ab7ee 100%);
}

.view-title {
    position: absolute;
    top: 0;
    left: 0;
    display: flex;
    height: 11px;
    background: #0a84d6;
    color: #111;
    font-weight: bold;
    line-height: 11px;
}

.view-title span {
    padding: 0 5px;
}

.view-title button {
    width: 7px;
    border-left: 1px solid #075f9c;
}

.view-title svg {
    width: 6px;
    height: 6px;
    fill: #111;
    stroke: none;
}

.model {
    width: 903px;
    height: 440px;
}

.iso path {
    stroke: #1c2338;
    stroke-width: 3;
}

.edge path {
    stroke: #000;
    stroke-width: 5;
}

.edge .rim {
    stroke-width: 6;
}

.mag {
    stroke: #d400d4;
    stroke-width: 5;
}

.mag.dashed {
    stroke-width: 3;
    stroke-dasharray: 16 22;
}

.pointer {
    fill: #fff;
    stroke: #555;
    stroke-width: 2;
}

.axis-z { stroke: #2a3bd0; stroke-width: 3; }
.axis-x { stroke: #c63050; stroke-width: 3; }
.axis-y { stroke: #30c050; stroke-width: 3; }

.model text {
    stroke: none;
    font-family: "Liberation Sans", sans-serif;
    font-size: 33px;
    font-weight: bold;
}

.tz { fill: #2a35d0; }
.tx { fill: #d8304a; }
.ty { fill: #2fcf4f; }

/* layers panel */
.layers {
    position: relative;
    flex: none;
    width: 118px;
    margin: 5px 0 0 5px;
    background: #fff;
}

.layer-tools {
    display: grid;
    grid-template-columns: repeat(9, 1fr);
    height: 23px;
    padding: 1px 1px 0 3px;
    align-items: center;
    justify-items: center;
}

.layer-tools svg {
    width: 10px;
    height: 10px;
}

.layers table {
    width: 116px;
    table-layout: fixed;
    border-collapse: collapse;
}

.layers th {
    padding: 0 0 0 2px;
    border-left: 1px solid #eee;
    font-weight: normal;
    text-align: left;
    overflow: hidden;
}

.layers th:first-child {
    border-left: none;
}

.layers .c1 { width: 11px; }
.layers .c2 { width: 10px; }
.layers .c3 { width: 5px; }

.layers td {
    height: 12px;
    padding: 0;
    border-bottom: 1px solid #ececec;
    line-height: 11px;
    white-space: nowrap;
}

.layers td:first-child {
    padding-left: 5px;
}

.layers td svg {
    width: 8px;
    height: 8px;
}

.current {
    font-weight: bold;
}

.swatch {
    display: block;
    width: 7px;
    height: 7px;
}

.black { background: #000; }
.line-red { background: #f00; }
.blue { background: #0a96ff; }
.lime { background: #16dd10; }
.pink { background: #f0088c; }

.hscroll {
    position: absolute;
    right: 0;
    bottom: 0;
    left: 0;
    height: 9px;
    padding: 4px 8px;
    background: #f3f3f3;
}

.thumb {
    width: 37px;
    height: 1px;
    background: #888;
}

.side-tabs {
    display: flex;
    flex: none;
    flex-direction: column;
    width: 17px;
    height: 428px;
    margin-top: 5px;
    padding-right: 1px;
}

.side-tabs button {
    display: flex;
    flex: 1;
    flex-direction: column;
    gap: 1px;
    align-items: center;
    position: relative;
    min-height: 0;
    padding-top: 3px;
    background: #fff;
    border-left: 1px solid #ccd;
}

.side-tabs button::after {
    content: "";
    position: absolute;
    bottom: -8px;
    left: -1px;
    width: 16px;
    height: 15px;
    background: linear-gradient(to bottom right, transparent 47%, #b4b9c4 48%, #d9dde5 54%, transparent 66%);
}

.side-tabs svg,
.side-tabs span {
    position: relative;
    z-index: 1;
}

.side-tabs svg {
    flex: none;
    width: 9px;
    height: 9px;
}

.side-tabs span {
    writing-mode: vertical-rl;
    line-height: 14px;
}

/* object snaps */
.osnap {
    display: flex;
    flex: none;
    align-items: center;
    gap: 5px;
    height: 21px;
    padding: 3px 0 0 5px;
}

.osnap label {
    display: flex;
    align-items: center;
    gap: 1px;
}

.osnap input {
    appearance: none;
    width: 8px;
    height: 8px;
    margin: 0;
    border: 1px solid #888;
    border-radius: 2px;
    background: #fff;
}

.osnap input:checked {
    position: relative;
    border-color: #0f65b5;
    background: #0f65b5;
}

.osnap input:checked::after {
    content: "";
    position: absolute;
    top: 0;
    left: 2px;
    width: 2px;
    height: 4px;
    border: solid #fff;
    border-width: 0 1px 1px 0;
    transform: rotate(45deg);
}

.osnap .soft input {
    border-color: #ccc;
}

.osnap .disable {
    margin-left: 7px;
}

.status {
    display: grid;
    flex: none;
    grid-template-columns: 34px 50px 50px 49px 50px 139px 35px 22px 34px 35px 35px 28px 48px 28px 1fr;
    height: 11px;
    border-top: 1px solid #c3c8d0;
    line-height: 11px;
}

.status > * {
    overflow: hidden;
    border-right: 1px solid var(--line);
    text-align: center;
    white-space: nowrap;
}

.status .layer {
    display: flex;
    align-items: center;
    gap: 1px;
    padding-left: 1px;
}

.status .on {
    background: #e6f1f7;
    color: #000;
    font-weight: bold;
}

.status .lens {
    border-right: none;
    padding-left: 1px;
    text-align: left;
}

/* icon paints */
.k { fill: #222; stroke: #111; }
.w { fill: #fff; }
.wf { fill: #fff; stroke: none; }
.wring { stroke: #fff; stroke-width: 2; }
.b { fill: #6f8ee8; stroke: #33478f; }
.lb { fill: #b3c2f2; stroke: #445aa6; }
.lb2 { fill: #7f9df0; stroke: #dbe4ff; }
.blue2 { fill: #1675cf; stroke: #0b3f78; }
.blue3 { fill: #3f62c8; stroke: #26377c; }
.navy { fill: #1f3f96; stroke: #0f1c48; }
.navyf { fill: #1f3f96; stroke: none; }
.steel { fill: #5c9dc4; stroke: #2a5d80; }
.cy { fill: #1d96e4; stroke: #125a9a; }
.teal { fill: #1fb3ac; stroke: #0c5f60; }
.teal2 { fill: #279a92; stroke: #175b58; }
.green { fill: #63a83a; }
.olive { fill: #8d8a56; }
.red { fill: #cb2027; stroke: #6d1015; }
.darkred { stroke: #6b2410; }
.brown { fill: #c5691f; stroke: #6b3410; }
.y { fill: #ffd83a; stroke: #7a6210; }
.o { fill: #f49b1c; stroke: #8a5208; }
.leaf { fill: #f0a24b; stroke: #d9822b; }
.gy { fill: #c9ccd1; stroke: #85888d; }
.lg { fill: #ddd; stroke: #555; }
.lgs { stroke: #b9bcc2; }
.dg { fill: #a5a8ad; stroke: none; }
.x { stroke: #999; stroke-width: 2; }
.redf { fill: #e3261c; stroke: none; }
.yf { fill: #ffe62a; stroke: none; }
.gf { fill: #35b04a; stroke: none; }
.bf { fill: #2f57d8; stroke: none; }
.mf { fill: #cf4bd0; stroke: none; }
.of { fill: #f0a060; stroke: none; }
.sf { fill: #7fa2d8; stroke: none; }
.magred { fill: #e8123c; stroke: #e8123c; }
.g { stroke: #85888d; }
.rd { stroke: #d8202a; }
.pk { stroke: #e2666c; }
.gr { stroke: #2d9a3c; }
.bl { stroke: #2c4fc0; }
.bl2 { stroke: #5a7ae0; stroke-width: 2; }
.cl { stroke: #29a3dc; }
.ye { stroke: #ffe04a; stroke-width: 2; }
.yel { stroke: #ffe04a; }
.white { stroke: #fff; }
.thick { stroke: #111; stroke-width: 2; }
.fat { stroke: #ffe04a; stroke-width: 2; }
.check { stroke: #222; stroke-dasharray: 1 1; stroke-width: 2; }
.dash { stroke-dasharray: 2 2; }
.dots { stroke-width: 3; stroke: #3a4a80; stroke-dasharray: 2 2; }
.dotg { stroke: #777; stroke-dasharray: 1 1; }
.dot2 { stroke-width: 3; stroke-dasharray: 3 2; }
.bulb { fill: #ffec6e; stroke: #8a7a20; }
.bulb.off { fill: #5f8ce8; stroke: #2e4a94; }
.ring { stroke-width: 3; }
.r1 { stroke: #e8342c; }
.r2 { stroke: #8a3ad0; }
.r3 { stroke: #2390e0; }
.r4 { stroke: #43b549; }
```
